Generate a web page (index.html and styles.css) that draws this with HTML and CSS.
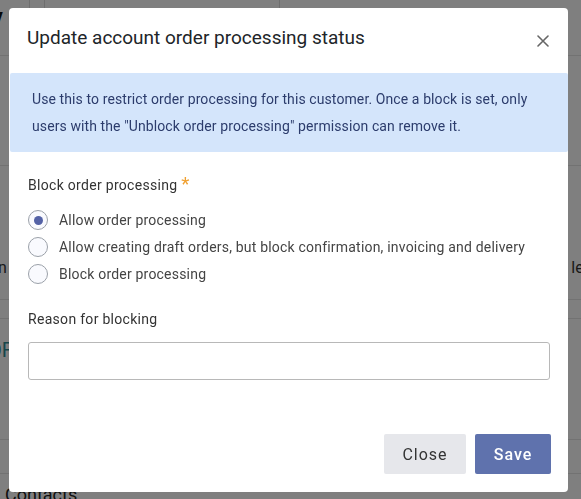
FILE: index.html
```html
<!DOCTYPE html>
<html lang="en">
<head>
    <meta charset="UTF-8">
    <meta name="viewport" content="width=device-width, initial-scale=1.0">
    <title>Update account order processing status</title>
    <link rel="stylesheet" href="styles.css">
</head>
<body>
    <!-- page behind the modal -->
    <div class="page">
        <div class="topbar">
            <div class="brand">Nov</div>
            <div class="topbar-sep"></div>
            <div class="search">
                <svg width="16" height="16" viewBox="0 0 16 16"><circle cx="7" cy="7" r="5" fill="none" stroke="#666" stroke-width="1.5"/><path d="M11 11l4 4" stroke="#666" stroke-width="1.5"/></svg>
                <span>Search for anything in the Portal</span>
            </div>
        </div>
        <div class="page-row row-a"></div>
        <div class="page-row row-b">
            <span class="frag-left">in</span>
            <span class="frag-right">les</span>
        </div>
        <div class="page-row row-c"></div>
        <div class="page-row row-d"><span class="frag-left teal">OF</span></div>
        <div class="page-row row-e"></div>
        <div class="page-contacts">Contacts</div>
    </div>

    <div class="overlay"></div>

    <div class="modal">
        <div class="modal-header">
            <h2>Update account order processing status</h2>
            <button class="close-x" aria-label="Close">
                <svg width="12" height="12" viewBox="0 0 12 12"><path d="M1 1L11 11M11 1L1 11" stroke="#666" stroke-width="1.6" stroke-linecap="round"/></svg>
            </button>
        </div>

        <div class="notice">
            Use this to restrict order processing for this customer. Once a block is set, only
            users with the "Unblock order processing" permission can remove it.
        </div>

        <div class="modal-body">
            <div class="field-label">Block order processing <span class="req">*</span></div>

            <div class="radios">
                <label class="radio checked"><span class="dot"></span>Allow order processing</label>
                <label class="radio"><span class="dot"></span>Allow creating draft orders, but block confirmation, invoicing and delivery</label>
                <label class="radio"><span class="dot"></span>Block order processing</label>
            </div>

            <div class="field-label reason">Reason for blocking</div>
            <div class="text-input"></div>
        </div>

        <div class="modal-footer">
            <button class="btn btn-light">Close</button>
            <button class="btn btn-primary">Save</button>
        </div>
    </div>
</body>
</html>
```

FILE: styles.css
```css
* {
    box-sizing: border-box;
}
body {
    margin: 0;
    font-family: Roboto, "Liberation Sans", Arial, sans-serif;
    background: #fff;
    color: #222;
    width: 581px;
    height: 499px;
    overflow: hidden;
}

/* background page */
.page {
    height: 499px;
    overflow: hidden;
}
.topbar {
    height: 56px;
    display: flex;
    border-bottom: 1px solid #e4e4e4;
}
.brand {
    width: 65px;
    margin-left: -36px;
    padding-top: 4px;
    font-size: 22px;
    font-weight: 700;
    color: #111;
    overflow: hidden;
    white-space: nowrap;
}
.topbar-sep {
    width: 15px;
    border-left: 1px solid #ddd;
}
.search {
    width: 236px;
    height: 44px;
    display: flex;
    align-items: center;
    gap: 10px;
    padding-left: 12px;
    border-left: 1px solid #ddd;
    border-right: 1px solid #ddd;
    border-bottom: 1px solid #ddd;
    font-size: 14px;
    color: #999;
    white-space: nowrap;
    overflow: hidden;
}
.page-row {
    border-bottom: 1px solid #e4e4e4;
    display: flex;
    justify-content: space-between;
    font-size: 16px;
    line-height: 18px;
    color: #333;
}
.row-a {
    height: 110px;
}
.row-b {
    height: 134px;
    align-items: flex-end;
    padding-bottom: 22px;
}
.row-c {
    height: 19px;
}
.row-d {
    height: 121px;
    align-items: flex-start;
    padding-top: 22px;
}
.row-e {
    height: 34px;
}
.frag-left {
    margin-left: -6px;
}
.frag-left.teal {
    margin-left: -12px;
    color: #2e8c95;
    font-size: 20px;
}
.frag-right {
    margin-right: -11px;
}
.page-contacts {
    padding: 10px 5px;
    font-size: 18px;
    color: #222;
}

.overlay {
    position: fixed;
    inset: 0;
    background: rgba(0, 0, 0, 0.5);
}

/* modal */
.modal {
    position: absolute;
    top: 8px;
    left: 9px;
    width: 559px;
    height: 484px;
    background: #fff;
    border-radius: 4px;
    display: flex;
    flex-direction: column;
}
.modal-header {
    height: 65px;
    display: flex;
    justify-content: space-between;
    align-items: flex-start;
    padding: 18px 18px 0 18px;
}
.modal-header h2 {
    margin: 0;
    font-size: 19px;
    font-weight: 400;
    line-height: 24px;
    color: #212529;
}
.close-x {
    border: none;
    background: none;
    padding: 0;
    margin-top: 9px;
    width: 14px;
    height: 14px;
    cursor: pointer;
}
.notice {
    margin: 0 0 0 1px;
    padding: 13px 22px 12px 22px;
    background: #d4e5fb;
    color: #2c3c6c;
    font-size: 14px;
    letter-spacing: 0.1px;
    line-height: 27px;
    border-radius: 2px;
}
.modal-body {
    padding: 23px 18px 0 19px;
    flex: 1;
}
.field-label {
    font-size: 14px;
    color: #333;
    letter-spacing: 0.3px;
    line-height: 20px;
}
.req {
    color: #f0a030;
    font-size: 19px;
    vertical-align: 0;
    line-height: 10px;
}
.radios {
    margin-top: 15px;
    display: flex;
    flex-direction: column;
    gap: 7px;
}
.radio {
    display: flex;
    align-items: center;
    gap: 11px;
    font-size: 14px;
    color: #444;
    letter-spacing: 0.2px;
    line-height: 20px;
}
.dot {
    width: 20px;
    height: 20px;
    border-radius: 50%;
    border: 1px solid #9aa0a8;
    background: #f9fafe;
    display: flex;
    align-items: center;
    justify-content: center;
}
.radio.checked .dot::after {
    content: "";
    width: 9px;
    height: 9px;
    border-radius: 50%;
    background: #5462a6;
}
.field-label.reason {
    margin-top: 25px;
}
.text-input {
    margin-top: 13px;
    height: 38px;
    border: 1px solid #b8b8b8;
    border-radius: 3px;
}
.modal-footer {
    display: flex;
    justify-content: flex-end;
    gap: 9px;
    padding: 0 17px 18px 0;
}
.btn {
    height: 40px;
    border: none;
    border-radius: 2px;
    font-family: Roboto, "Liberation Sans", Arial, sans-serif;
    font-size: 16px;
    letter-spacing: 1px;
    cursor: pointer;
}
.btn-light {
    width: 82px;
    background: #e6e7eb;
    color: #333;
}
.btn-primary {
    width: 76px;
    background: #5f72ad;
    color: #fff;
    font-weight: 500;
}
```
